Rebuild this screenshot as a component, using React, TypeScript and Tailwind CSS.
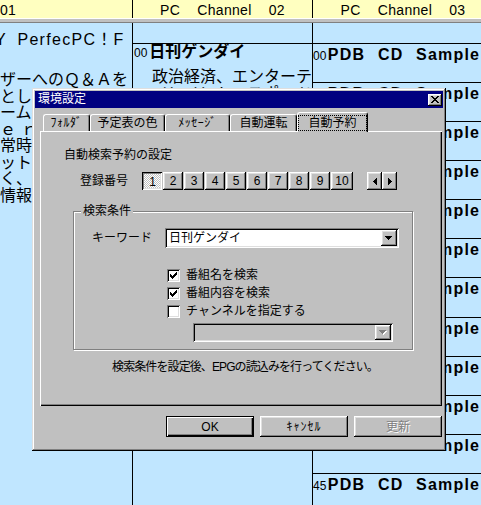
import React from 'react';

const raised =
  'shadow-[inset_-1px_-1px_0_#000,inset_1px_1px_0_#fff,inset_-2px_-2px_0_#808080,inset_2px_2px_0_#dfdfdf]';
const sunken =
  'shadow-[inset_1px_1px_0_#808080,inset_-1px_-1px_0_#fff,inset_2px_2px_0_#000,inset_-2px_-2px_0_#dfdfdf]';
const pressed =
  'shadow-[inset_1px_1px_0_#000,inset_-1px_-1px_0_#fff,inset_2px_2px_0_#808080,inset_-2px_-2px_0_#dfdfdf]';

function DownArrow({ disabled = false }: { disabled?: boolean }) {
  const d = 'M0 0h7v1h-1v1h-1v1h-1v1h-1v-1h-1v-1h-1v-1h-1z';
  return (
    <svg width="8" height="5" viewBox="0 0 8 5" shapeRendering="crispEdges">
      {disabled && <path d={d} fill="#fff" transform="translate(1 1)" />}
      <path d={d} fill={disabled ? '#808080' : '#000'} />
    </svg>
  );
}

function Check() {
  return (
    <svg width="7" height="7" viewBox="0 0 7 7" shapeRendering="crispEdges">
      <path
        d="M6 0h1v1h-1z M5 1h2v1h-2z M0 2h1v1h-1z M4 2h3v1h-3z M0 3h2v1h-2z M3 3h3v1h-3z M0 4h5v1h-5z M1 5h3v1h-3z M2 6h1v1h-1z"
        fill="#000"
      />
    </svg>
  );
}

function CloseGlyph() {
  return (
    <svg width="8" height="7" viewBox="0 0 8 7" shapeRendering="crispEdges">
      <path
        d="M0 0h2v1h-2z M6 0h2v1h-2z M1 1h2v1h-2z M5 1h2v1h-2z M2 2h4v1h-4z M3 3h2v1h-2z M2 4h4v1h-4z M1 5h2v1h-2z M5 5h2v1h-2z M0 6h2v1h-2z M6 6h2v1h-2z"
        fill="#000"
      />
    </svg>
  );
}

function Tri({ dir }: { dir: 'left' | 'right' }) {
  return (
    <svg width="4" height="7" viewBox="0 0 4 7" shapeRendering="crispEdges">
      <path
        d={
          dir === 'left'
            ? 'M3 0h1v7h-1v-1h-1v-1h-1v-1h-1v-1h1v-1h1v-1h1z'
            : 'M0 0h1v1h1v1h1v1h1v1h-1v1h-1v1h-1v1h-1z'
        }
        fill="#000"
      />
    </svg>
  );
}

const col1Lines = [
  'ザーへのＱ＆Ａを',
  'としてご利用くださ',
  'ームページ',
  'ｅ ｒ',
  '常時放送中',
  'ットＩＴ',
  'く、スポーツ',
  '情報が満載',
];

const col2Lines = ['政治経済、エンターテ', 'インメント、スポーツ', 'など様々な情報をお届', 'けします。'];

const rowHeights = [39, 39, 39, 39, 39, 39, 40, 39, 39, 39, 39, 39];
const mins = ['00', '15', '30', '45'];

export default function App() {
  return (
    <div className="relative w-[481px] h-[505px] overflow-hidden bg-[#c0e6ff] text-black font-['Liberation_Sans','Noto_Sans_CJK_JP',sans-serif]">
      {/* channel header */}
      <div className="flex h-[18px] overflow-hidden bg-[#ffffc0] text-[14px] leading-[20px] tracking-[0.3px] [word-spacing:13px] whitespace-nowrap">
        <div className="w-[133px] shrink-0 border-r border-black">01</div>
        <div className="w-[180px] shrink-0 border-r border-black text-center">PC Channel 02</div>
        <div className="w-[180px] shrink-0 text-center">PC Channel 03</div>
      </div>
      <div className="h-[5px] bg-[#c0c0c0] border-t border-white border-b border-b-[#808080]" />

      {/* program table */}
      <div className="flex h-[482px] whitespace-nowrap">
        <div className="w-[133px] shrink-0 border-r border-black overflow-hidden pt-[8px] text-[16px]">
          <div className="ml-[-5px] leading-[18px] tracking-[1.3px] [word-spacing:5px]">Y PerfecPC！F</div>
          <div className="mt-[23px] leading-[16.5px]">
            {col1Lines.map((l) => (
              <div key={l}>{l}</div>
            ))}
          </div>
        </div>

        <div className="w-[180px] shrink-0 border-r border-black overflow-hidden pt-[20px]">
          <div className="border-t border-black">
            <div className="flex items-baseline leading-[16px]">
              <span className="text-[12px] pl-[1px]">00</span>
              <span className="text-[16px] font-bold ml-[2px]">日刊ゲンダイ</span>
            </div>
            <div className="mt-[8px] pl-[19px] text-[16px] leading-[16.5px]">
              {col2Lines.map((l) => (
                <div key={l}>{l}</div>
              ))}
            </div>
          </div>
        </div>

        <div className="w-[180px] shrink-0 overflow-hidden pt-[20px]">
          {rowHeights.map((h, i) => (
            <div
              key={i}
              className={`${h === 40 ? 'h-[40px]' : 'h-[39px]'} border-t border-black pt-[2px] flex items-baseline`}
            >
              <span className="text-[12px]">{mins[i % 4]}</span>
              <span className="ml-[1.5px] text-[16px] font-bold leading-[18px] tracking-[1.2px] [word-spacing:7px]">
                PDB CD Sample
              </span>
            </div>
          ))}
        </div>
      </div>

      {/* settings dialog */}
      <div className="absolute left-[32px] top-[88px] w-[414px] h-[363px] bg-[#c0c0c0] p-[3px] text-[12px] shadow-[inset_-1px_-1px_0_#000,inset_1px_1px_0_#dfdfdf,inset_-2px_-2px_0_#808080,inset_2px_2px_0_#fff]">
        <div className="flex items-center h-[17px] bg-[#000080] pl-[3px] pr-[1px]">
          <span className="text-white leading-[17px]">環境設定</span>
          <div className={`ml-auto w-[14px] h-[12px] bg-[#c0c0c0] flex items-center justify-center ${raised}`}>
            <CloseGlyph />
          </div>
        </div>

        <div className="pl-[5px] pt-[4px]">
          {/* tabs */}
          <div className="flex items-end h-[19px] pl-[3px]">
            <div className="w-[47px] h-[17px] flex items-center justify-center tracking-[0.5px] border-t border-l border-white border-r border-r-black rounded-t-[3px] shadow-[inset_-1px_0_0_#808080]">
              ﾌｫﾙﾀﾞ
            </div>
            <div className="w-[75px] h-[17px] flex items-center justify-center border-t border-l border-white border-r border-r-black rounded-t-[3px] shadow-[inset_-1px_0_0_#808080]">
              予定表の色
            </div>
            <div className="w-[65px] h-[17px] flex items-center justify-center tracking-[0.5px] border-t border-l border-white border-r border-r-black rounded-t-[3px] shadow-[inset_-1px_0_0_#808080]">
              ﾒｯｾｰｼﾞ
            </div>
            <div className="w-[67px] h-[17px] flex items-center justify-center border-t border-l border-white border-r border-r-black rounded-t-[3px] shadow-[inset_-1px_0_0_#808080]">
              自動運転
            </div>
            <div className="relative z-10 mb-[-1px] w-[71px] h-[20px] flex items-center justify-center bg-[#c0c0c0] border-t border-l border-white border-r border-r-black rounded-t-[3px] shadow-[inset_-1px_0_0_#808080]">
              <span className="border border-dotted border-black px-[9px] leading-[14px]">自動予約</span>
            </div>
          </div>

          {/* tab page */}
          <div className="w-[402px] h-[275px] pt-[17px] shadow-[inset_1px_1px_0_#fff,inset_-1px_-1px_0_#000,inset_-2px_-2px_0_#808080]">
            <div className="ml-[24px] leading-[14px]">自動検索予約の設定</div>

            <div className="mt-[10px] flex items-center h-[18px]">
              <span className="ml-[40px] w-[62px] leading-[14px]">登録番号</span>
              <div className="flex gap-[1px]">
                {[1, 2, 3, 4, 5, 6, 7, 8, 9, 10].map((n) => (
                  <div
                    key={n}
                    className={`${n === 10 ? 'w-[22px]' : 'w-[20px]'} h-[18px] flex items-center justify-center leading-none ${
                      n === 1
                        ? `${pressed} bg-[image:repeating-conic-gradient(#fff_0_25%,#c0c0c0_0_50%)] bg-[length:2px_2px] pl-[1px] pt-[1px]`
                        : `${raised} bg-[#c0c0c0]`
                    }`}
                  >
                    {n}
                  </div>
                ))}
              </div>
              <div className="ml-[14px] flex">
                <div className={`w-[15px] h-[18px] flex items-center justify-center ${raised}`}>
                  <Tri dir="left" />
                </div>
                <div className={`w-[15px] h-[18px] flex items-center justify-center ${raised}`}>
                  <Tri dir="right" />
                </div>
              </div>
            </div>

            {/* search conditions group */}
            <div className="relative ml-[33px] mt-[21px] w-[340px] pb-[7px] border border-[#808080] shadow-[inset_1px_1px_0_#fff,1px_1px_0_#fff]">
              <span className="absolute left-[7px] top-[-8px] px-[2px] bg-[#c0c0c0] leading-[14px]">検索条件</span>

              <div className="mt-[16px] flex items-center h-[20px]">
                <span className="ml-[18px] w-[73px] leading-[14px]">キーワード</span>
                <div className={`w-[234px] h-[20px] bg-white flex items-center ${sunken}`}>
                  <span className="pl-[4px] leading-[14px]">日刊ゲンダイ</span>
                  <div className={`ml-auto mr-[2px] w-[16px] h-[16px] bg-[#c0c0c0] flex items-center justify-center ${raised}`}>
                    <DownArrow />
                  </div>
                </div>
              </div>

              <div className="mt-[18px]">
                {[
                  { label: '番組名を検索', checked: true },
                  { label: '番組内容を検索', checked: true },
                  { label: 'チャンネルを指定する', checked: false },
                ].map((c) => (
                  <div key={c.label} className="ml-[93px] h-[18px] flex items-center gap-[6px]">
                    <div className={`w-[13px] h-[13px] bg-white flex items-center justify-center ${sunken}`}>
                      {c.checked && <Check />}
                    </div>
                    <span className="leading-[14px]">{c.label}</span>
                  </div>
                ))}
              </div>

              <div className={`mt-[3px] ml-[119px] w-[200px] h-[19px] bg-[#c0c0c0] flex items-center ${sunken}`}>
                <div className={`ml-auto mr-[2px] w-[16px] h-[15px] bg-[#c0c0c0] flex items-center justify-center ${raised}`}>
                  <DownArrow disabled />
                </div>
              </div>
            </div>

            <div className="mt-[10px] pl-[8px] text-center leading-[14px] tracking-[-0.9px]">
              検索条件を設定後、EPGの読込みを行ってください。
            </div>
          </div>

          {/* buttons */}
          <div className="mt-[10px] flex justify-end gap-[6px] pr-[1px]">
            <div className="w-[88px] h-[21px] border border-black flex items-center justify-center shadow-[inset_1px_1px_0_#fff,inset_-1px_-1px_0_#000,inset_-2px_-2px_0_#808080]">
              OK
            </div>
            <div className={`w-[88px] h-[21px] flex items-center justify-center tracking-[1px] ${raised}`}>ｷｬﾝｾﾙ</div>
            <div className={`w-[88px] h-[21px] flex items-center justify-center text-[#808080] [text-shadow:1px_1px_0_#fff] ${raised}`}>
              更新
            </div>
          </div>
        </div>
      </div>
    </div>
  );
}
